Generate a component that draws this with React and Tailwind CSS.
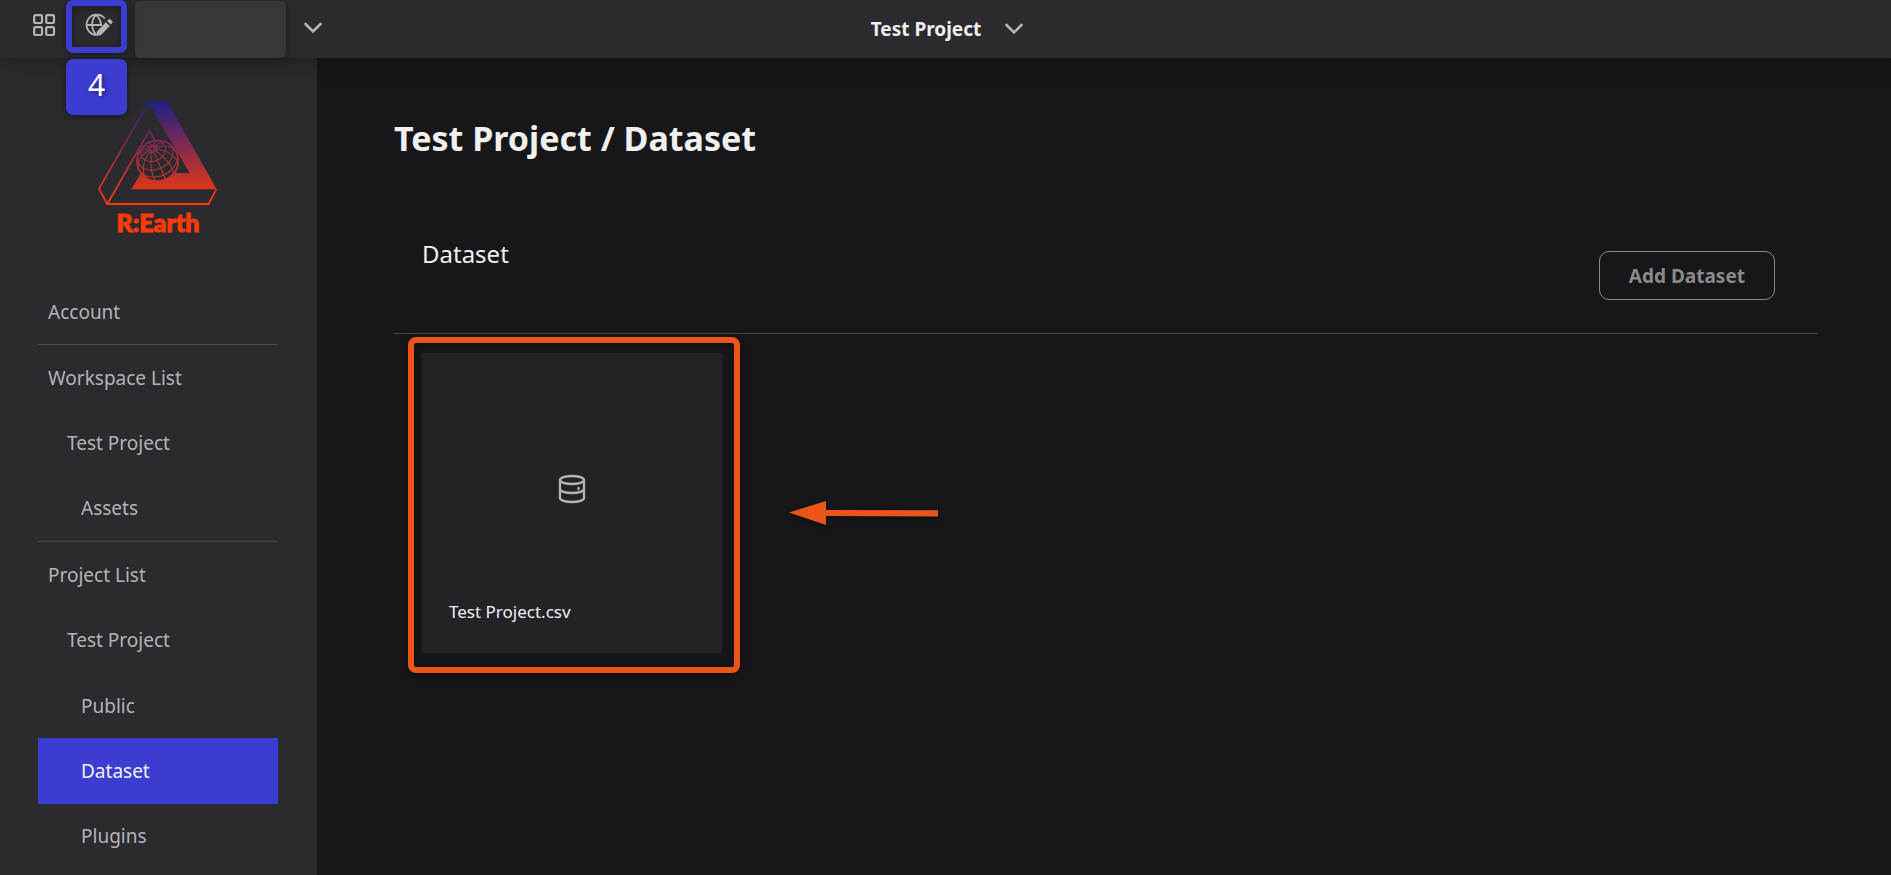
import React from "react";

const CORAL = "#eb5519";

function GridIcon() {
  return (
    <svg width="24" height="24" viewBox="0 0 24 24" fill="none" stroke="currentColor" strokeWidth="2.2" aria-hidden="true">
      <rect x="2.2" y="2.2" width="7.8" height="7.8" rx="1.2" />
      <rect x="14.200" y="2.2" width="7.8" height="7.8" rx="1.2" />
      <rect x="2.2" y="14.200" width="7.8" height="7.8" rx="1.2" />
      <rect x="14.200" y="14.200" width="7.8" height="7.8" rx="1.2" />
    </svg>
  );
}

function GlobePenIcon() {
  return (
    <svg width="28" height="24" viewBox="0 0 28 24" fill="none" stroke="currentColor" strokeWidth="1.8" aria-hidden="true">
      <path d="M11.500 22A10.200 10.200 0 1 1 19.800 5.500M1.200 12H17M11 1.800C5.800 7 5.800 16.500 11.500 22M11 1.800C14.500 5 16 8.500 16 12" />
      <path d="M11.500 23L12 18.500L20.800 9.200L24.800 13L16 22L11.500 23Z" fill="currentColor" stroke="none" />
      <path d="M22 8L23.600 6.400Q24.600 5.600 25.600 6.500L27.200 8.200Q28 9.200 27.200 10L25.800 11.600Z" fill="currentColor" stroke="none" />
    </svg>
  );
}

function Chevron() {
  return (
    <svg width="18" height="12" viewBox="0 0 18 12" fill="none" stroke="currentColor" strokeWidth="2.6" strokeLinecap="round" aria-hidden="true">
      <path d="M1.500 2L9 9.500L16.500 2" />
    </svg>
  );
}

function DatabaseIcon() {
  return (
    <svg width="28" height="30" viewBox="0 0 28 30" fill="none" stroke="currentColor" strokeWidth="2.3" strokeLinecap="round" aria-hidden="true">
      <ellipse cx="14" cy="6" rx="12" ry="4" />
      <path d="M2 6V24C2 26.200 7.400 28 14 28S26 26.200 26 24V6" />
      <path d="M2 15C2 17.200 7.400 19 14 19S26 17.200 26 15" />
      <path d="M20.500 14V15" />
    </svg>
  );
}

/* Wireframe globe: orthographic projection of a sphere tilted towards the viewer. */
const POLE = [-0.26, -0.6, 0.757];
const AXIS_A = [0.917, -0.397, 0];
const AXIS_B = [0.3, 0.694, 0.653];

function project(lat, lon) {
  const f = (lat * Math.PI) / 180;
  const l = (lon * Math.PI) / 180;
  return [0, 1, 2].map(
    (i) => Math.sin(f) * POLE[i] + Math.cos(f) * (Math.cos(l) * AXIS_A[i] + Math.sin(l) * AXIS_B[i])
  );
}

function trace(points) {
  let d = "";
  let drawing = false;
  points.forEach(([x, y, z]) => {
    if (z < 0) {
      drawing = false;
      return;
    }
    d += (drawing ? "L" : "M") + (234 + 62 * x).toFixed(1) + " " + (214 + 62 * y).toFixed(1);
    drawing = true;
  });
  return d;
}

const steps = (from, to, by) => Array.from({ length: Math.floor((to - from) / by) + 1 }, (_, i) => from + i * by);
const parallels = [76, 52, 27, 2, -22].map((lat) => trace(steps(0, 360, 5).map((lon) => project(lat, lon))));
const meridians = steps(0, 330, 30).map((lon) => trace(steps(-85, 85, 5).map((lat) => project(lat, lon))));
const GLOBE = parallels.concat(meridians).join("");

function Logo() {
  return (
    <svg width="122" height="108" viewBox="52 28 366 324" fill="none" aria-hidden="true">
      <defs>
        <linearGradient id="logo-fade" gradientUnits="userSpaceOnUse" x1="0" y1="34" x2="0" y2="343">
          <stop offset="0" stopColor="#1e2086" />
          <stop offset="1" stopColor="#ff3a06" />
        </linearGradient>
      </defs>
      <path
        fill="url(#logo-fade)"
        d="M208 34H262L411 299H155L183 252C208 285 262 285 288 250H330L208 42Z"
      />
      <g stroke="url(#logo-fade)" strokeWidth="5.500">
        <path d="M208 36L58 297L83 343H387L410 299M83 343L209 123L229 157" />
        <circle cx="234" cy="214" r="62" strokeWidth="4.500" />
        <path d={GLOBE} strokeWidth="3.600" />
      </g>
    </svg>
  );
}

const groups = [
  { height: "", items: [{ label: "Account", level: 0 }] },
  {
    height: "h-[197px]",
    items: [
      { label: "Workspace List", level: 0 },
      { label: "Test Project", level: 1 },
      { label: "Assets", level: 2 },
    ],
  },
  {
    height: "h-[327px]",
    items: [
      { label: "Project List", level: 0 },
      { label: "Test Project", level: 1 },
      { label: "Public", level: 2 },
      { label: "Dataset", level: 2, active: true },
      { label: "Plugins", level: 2 },
    ],
  },
];

const indents = ["pl-[10px]", "pl-[29px]", "pl-[43px]"];

function NavGroup({ group, last }) {
  return (
    <ul className={"flex flex-col " + group.height + (last ? "" : " border-b border-[#4a4a4a]")}>
      {group.items.map((item) => (
        <li key={item.label} className="flex min-h-[65px] flex-1">
          <a
            href="#"
            aria-current={item.active ? "page" : undefined}
            className={
              "flex flex-1 items-center text-[19px] leading-6 " +
              indents[item.level] +
              (item.active ? " bg-[#3b3cd0] text-[#f0f0f0]" : " text-[#b4b4b4]")
            }
          >
            {item.label}
          </a>
        </li>
      ))}
    </ul>
  );
}

export default function App() {
  return (
    <div className="flex min-h-screen flex-col bg-[#171719] font-['Noto_Sans',sans-serif] text-[#f0f0f0]">
      <header className="relative z-10 grid h-[58px] grid-cols-[1fr_auto_1fr] items-center bg-[#2b2a2f] text-[#b4b4b4] shadow-[0_4px_24px_rgba(0,0,0,0.25)]">
        <div className="flex items-start self-start">
          <button type="button" aria-label="Dashboard" className="mt-[13px] ml-8">
            <GridIcon />
          </button>
          <div className="relative ml-[10px]">
            <button
              type="button"
              aria-label="Edit scene"
              className="flex h-[53px] w-[61px] items-center justify-center rounded-[7px] border-6 border-[#3b3cd0] pb-1 pl-1 shadow-[0_2px_8px_rgba(0,0,0,0.4),inset_0_2px_8px_rgba(0,0,0,0.4)]"
            >
              <GlobePenIcon />
            </button>
            <div className="absolute top-[59px] left-0 flex h-14 w-[61px] items-center justify-center rounded-[7px] bg-[#3b3cd0] pb-1 text-[30px] leading-none text-white shadow-[0_2px_8px_rgba(0,0,0,0.4)] [text-shadow:2px_2px_4px_rgba(0,0,0,0.4)]">
              4
            </div>
          </div>
          <div className="mt-px ml-2 h-[57px] w-[151px] rounded-[5px] bg-[#373737] shadow-[0_2px_8px_rgba(0,0,0,0.4)]" />
          <button type="button" aria-label="Switch workspace" className="mt-[22px] ml-[18px]">
            <Chevron />
          </button>
        </div>
        <button type="button" className="ml-[3px] flex items-center gap-6 text-[19px] leading-6 font-bold text-[#f0f0f0]">
          Test Project
          <span className="text-[#b4b4b4]">
            <Chevron />
          </span>
        </button>
      </header>

      <div className="flex flex-1">
        <aside className="w-[317px] shrink-0 bg-[#2b2a2f] pt-[41px] pr-[39px] pl-[38px]">
          <div className="flex flex-col items-center pb-[38px]">
            <Logo />
            <span className="pb-1 font-['Lato',sans-serif] text-[25px] leading-[30px] font-black text-[#ff3a06] [-webkit-text-stroke:1px_#ff3a06]">
              R:Earth
            </span>
          </div>
          <nav aria-label="Settings">
            {groups.map((group, i) => (
              <NavGroup key={i} group={group} last={i === groups.length - 1} />
            ))}
          </nav>
        </aside>

        <main className="min-w-0 flex-1 pt-[58px] pr-[73px] pl-[77px]">
          <h1 className="text-[34px] leading-[44px] font-bold">Test Project / Dataset</h1>
          <section>
            <div className="mt-[78px] flex items-start justify-between border-b border-[#4a4a4a] pr-[43px] pb-[33px] pl-7">
              <h2 className="text-2xl">Dataset</h2>
              <button
                type="button"
                className="mt-[13px] h-[49px] rounded-[10px] border border-[#8a8a8a] px-[29px] text-[19px] leading-6 font-bold text-[#8a8a8a]"
              >
                Add Dataset
              </button>
            </div>
            <div className="flex items-center gap-12 pt-[3px] pl-[14px]">
              <div className="rounded-[8px] border-6 border-[#eb5519] pt-[10px] pr-3 pb-[14px] pl-2 shadow-[0_2px_8px_rgba(0,0,0,0.4),inset_0_2px_8px_rgba(0,0,0,0.4)]">
                <article className="flex size-[300px] flex-col bg-[#232226]">
                  <div className="flex flex-1 items-center justify-center pt-6 text-[#b4b4b4]">
                    <DatabaseIcon />
                  </div>
                  <p className="px-[27px] pb-[29px] text-[17px] leading-6">Test Project.csv</p>
                </article>
              </div>
              <svg className="mt-4 ml-px drop-shadow-[0_2px_3px_rgba(0,0,0,0.4)]" width="150" height="26" viewBox="0 0 150 26" aria-hidden="true">
                <path d="M0 12.500L37 1V10L149 10.300V16.600L37 16V25Z" fill={CORAL} />
              </svg>
            </div>
          </section>
        </main>
      </div>
    </div>
  );
}
